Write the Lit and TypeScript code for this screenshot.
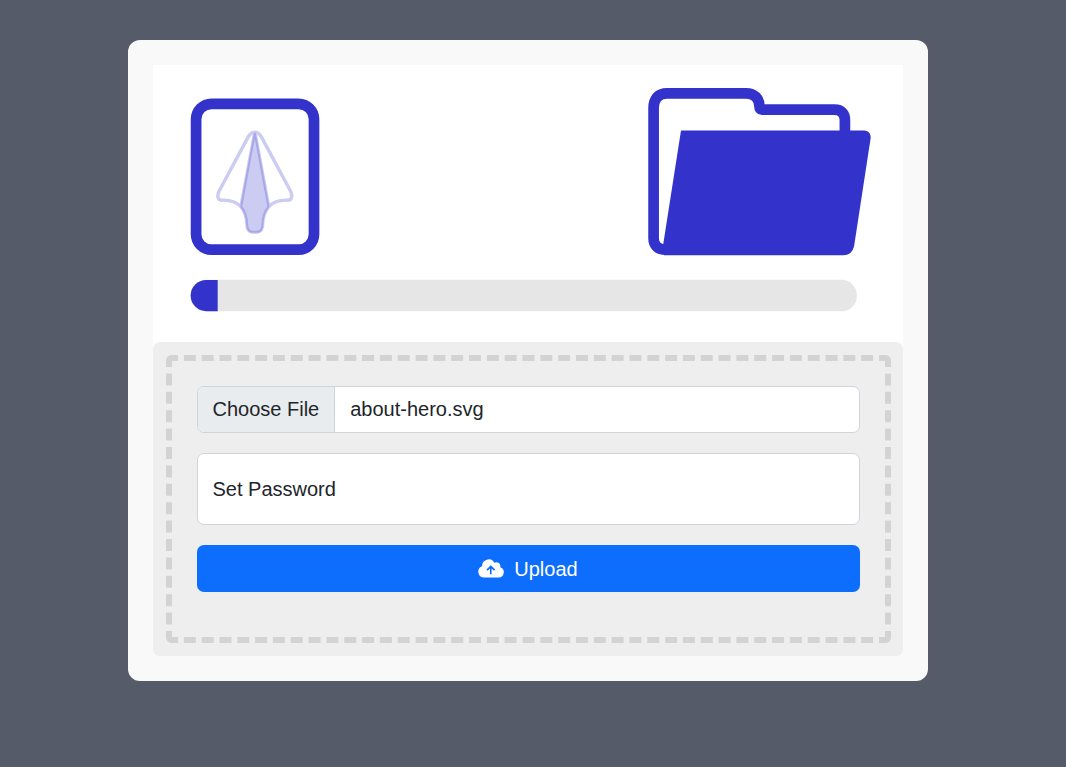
import { LitElement, html, css } from "lit";
import { customElement, property } from "lit/decorators.js";

@customElement("transfer-art")
class TransferArt extends LitElement {
  static styles = css`
    :host { display: block; height: 277px; background: #fff; }
    svg { display: block; }
    .ink { fill: #3333cc; }
    .frame { fill: none; stroke: #3333cc; stroke-width: 10.7; }
    .track { fill: #e6e6e6; }
    .wings { fill: none; stroke: #ccccf2; stroke-width: 3.4; stroke-linejoin: round; }
    .shaft { fill: #ccccf2; stroke: #ccccf2; stroke-width: 4; stroke-linejoin: round; }
    .edge { fill: none; stroke: #a8a8e8; stroke-width: 2; stroke-linejoin: round; }
  `;
  render() {
    const shaft =
      "M254.8 133.5L241.2 206.7C245.4 211.5 247 217 247.2 224.5C247.4 229.5 249 231.7 252.5 231.7L257.1 231.7C260.6 231.7 262.2 229.5 262.4 224.5C262.6 217 264.2 211.5 268.4 206.7Z";
    return html`
      <svg width="750" height="277" viewBox="153 65 750 277">
        <rect class="frame" x="196.1" y="103.8" width="117.9" height="145.9" rx="15.5" />
        <path class="wings" d="M241.2 206.7C236 201.5 229 199.8 221.5 200.2C217.6 200 216.9 196 219 191.2L248.5 136.4C250.3 133.5 252.3 132.2 254.8 132.2C257.3 132.2 259.3 133.5 261.1 136.4L290.6 191.2C292.7 196 292 200 288.1 200.2C280.6 199.8 273.6 201.5 268.4 206.7" />
        <path class="shaft" d=${shaft} />
        <path class="edge" d=${shaft} />
        <path class="frame" d="M666 249.7C658 249.7 653.6 245.5 653.6 238.5V108C653.6 98.5 658.5 93.3 667 93.3H746C754.5 93.3 759.5 98.5 759.5 106.5Q759.5 109.6 762 109.6H834.5C841.5 109.6 844.9 113.5 844.9 120V133" />
        <path class="ink" d="M681 130.6H863C868.5 130.6 871 133.5 870.6 138.5L854.2 245.5C852.8 251.7 849.5 255.2 843.5 255.2H664L663.2 244.5Z" />
        <rect class="track" x="190.5" y="279.8" width="666.5" height="31.5" rx="15.7" />
        <path class="ink" d="M217.7 279.9V311.2H206.3A15.65 15.65 0 0 1 206.3 279.9Z" />
      </svg>
    `;
  }
}

@customElement("app-root")
class AppRoot extends LitElement {
  @property() fileName = "about-hero.svg";

  static styles = css`
    * { box-sizing: border-box; }
    :host {
      display: block;
      height: 767px;
      padding: 40px 0 0 128px;
      box-sizing: border-box;
      background: #555b69;
      color: #212529;
      font: 20px/30px "Liberation Sans", Arial, sans-serif;
    }
    .card { width: 800px; padding: 25px; border-radius: 12px; background: #f9f9f9; }
    .backing { background: linear-gradient(#fff 50%, transparent 50%); }
    .drop { height: 314px; padding: 13px 12px 13px 13px; border-radius: 7px; background: #eee; }
    .dashed {
      display: flex;
      flex-direction: column;
      gap: 20px;
      height: 288px;
      padding: 25px;
      border: 6px dashed #d3d3d3;
      border-radius: 6px;
    }
    .field {
      display: flex;
      width: 100%;
      height: 47px;
      border: 1px solid #ced4da;
      border-radius: 7px;
      background: #fff;
      overflow: hidden;
      line-height: 45px;
    }
    .choose {
      width: 137px;
      padding-left: 14.5px;
      border-right: 1px solid #ced4da;
      background: #e9ecef;
      white-space: nowrap;
    }
    .name { padding-left: 15.2px; }
    .password { height: 72px; padding-left: 14.5px; line-height: 70px; }
    .upload {
      display: flex;
      align-items: center;
      justify-content: center;
      gap: 10px;
      width: 100%;
      height: 47px;
      padding: 0 2px 0 0;
      border: 0;
      border-radius: 7px;
      background: #0d6efd;
      color: #fff;
      font: inherit;
    }
    .cloud { width: 27px; height: 20px; fill: #fff; }
  `;

  render() {
    return html`
      <main class="card">
        <transfer-art></transfer-art>
        <div class="backing">
          <section class="drop">
            <div class="dashed">
              <div class="field">
                <span class="choose">Choose File</span>
                <span class="name">${this.fileName}</span>
              </div>
              <div class="field password">Set Password</div>
              <button class="upload">
                <svg class="cloud" viewBox="-0.4 0 27 20">
                  <path fill-rule="evenodd" d="M6.7 18.6A5.9 5.9 0 0 1 4.7 7.2A6.5 6.5 0 0 1 16.9 3.8A4 4 0 0 1 22.8 8.3A5.3 5.3 0 0 1 21.3 18.6ZM13.4 6.3L9 10.6L10.2 11.8L12.6 9.6V15.2H14.2V9.6L16.6 11.8L17.8 10.6Z" />
                </svg>
                <span>Upload</span>
              </button>
            </div>
          </section>
        </div>
      </main>
    `;
  }
}
